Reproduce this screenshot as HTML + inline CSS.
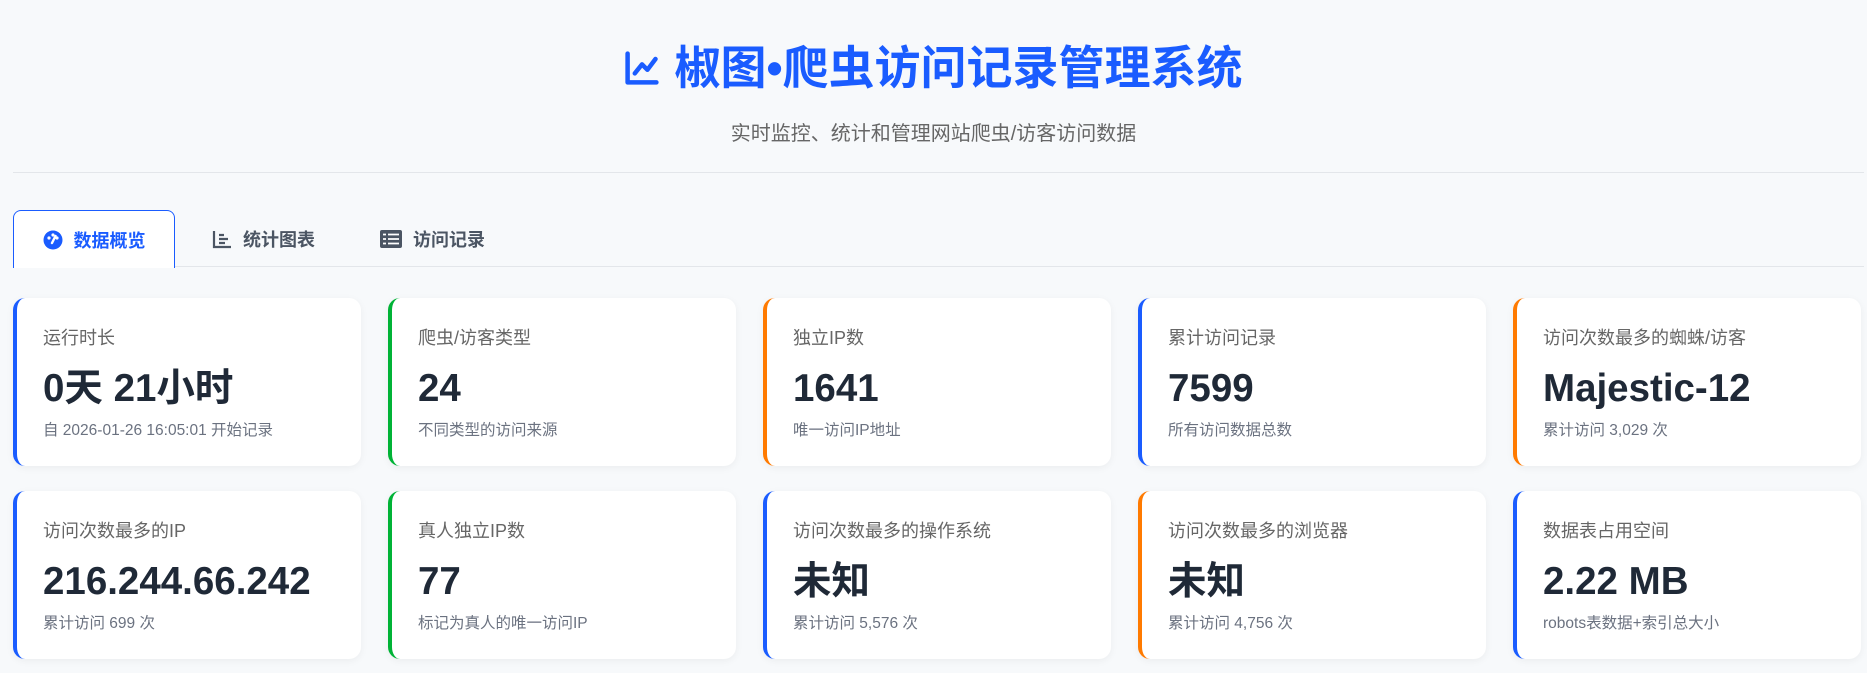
<!DOCTYPE html>
<html><head><meta charset="utf-8"><style>
*{box-sizing:border-box;margin:0;padding:0}
body{width:1867px;height:673px;background:#f7f9fb;font-family:"Liberation Sans","Noto Sans CJK SC",sans-serif;overflow:hidden;position:relative}
.title{position:absolute;top:36px;left:0;width:1867px;text-align:center;color:#1a5cff;font-size:46px;font-weight:bold;line-height:64px}
.title svg{vertical-align:-2px;margin-right:14px}
.sub{position:absolute;top:120px;left:0;width:1867px;text-align:center;color:#666;font-size:20px;line-height:28px}
.hr{position:absolute;top:172px;left:13px;width:1851px;height:1px;background:#e3e6ea}
.tabline{position:absolute;top:266px;left:13px;width:1851px;height:1px;background:#e3e6ea}
.tab{position:absolute;top:210px;height:57px;display:flex;align-items:center;font-size:18px;font-weight:bold;color:#4b5563}
.tab.active{left:13px;width:162px;border:1px solid #1a5cff;border-bottom:none;border-radius:8px 8px 0 0;background:#fff;color:#1a5cff;justify-content:center;height:58px}
.tab svg{margin-right:11px}
.card{position:absolute;width:348px;height:168px;background:#fff;border-radius:12px;border-left:4px solid #1a5cff;box-shadow:0 2px 8px rgba(0,0,0,.05);padding:26px 0 0 26px}
.lbl{font-size:18px;color:#666;line-height:28px}
.val{font-size:38.5px;font-weight:bold;color:#1f2937;line-height:50px;margin-top:12px}
.s{font-size:15.5px;color:#6b7280;line-height:20px;margin-top:7px}
.g{border-left-color:#00b336}.o{border-left-color:#ff7a00}
</style></head><body>
<div class="title"><svg width="36" height="36" viewBox="0 0 40 40" fill="none" stroke="#1a5cff" stroke-width="5" stroke-linecap="round" stroke-linejoin="round"><path d="M4 4V36H36"/><path d="M12 26L20 16L26 22L35 10"/></svg>椒图•爬虫访问记录管理系统</div>
<div class="sub">实时监控、统计和管理网站爬虫/访客访问数据</div>
<div class="hr"></div>
<div class="tabline"></div>
<div class="tab active"><svg width="20" height="20" viewBox="0 0 20 20"><circle cx="10" cy="10" r="9.5" fill="#1a5cff"/><circle cx="6" cy="8" r="1.6" fill="#fff"/><circle cx="10" cy="5" r="1.6" fill="#fff"/><circle cx="14" cy="8" r="1.6" fill="#fff"/><path d="M12.5 6L9 13" stroke="#fff" stroke-width="2.4" stroke-linecap="round"/></svg>数据概览</div>
<div class="tab" style="left:212px"><svg width="20" height="20" viewBox="0 0 20 20" fill="none" stroke="#4b5563" stroke-width="2.2"><path d="M2 2V18H19"/><path d="M7 6H12M7 10H16M7 14H13"/></svg>统计图表</div>
<div class="tab" style="left:380px"><svg width="22" height="18" viewBox="0 0 22 18"><rect x="0" y="0" width="22" height="18" rx="2" fill="#4b5563"/><path d="M3 4.5H6M3 9H6M3 13.5H6M8 4.5H19M8 9H19M8 13.5H19" stroke="#fff" stroke-width="1.8"/></svg>访问记录</div>

<div class="card" style="left:13px;top:298px"><div class="lbl">运行时长</div><div class="val">0天 21小时</div><div class="s">自 2026-01-26 16:05:01 开始记录</div></div>
<div class="card g" style="left:388px;top:298px"><div class="lbl">爬虫/访客类型</div><div class="val">24</div><div class="s">不同类型的访问来源</div></div>
<div class="card o" style="left:763px;top:298px"><div class="lbl">独立IP数</div><div class="val">1641</div><div class="s">唯一访问IP地址</div></div>
<div class="card" style="left:1138px;top:298px"><div class="lbl">累计访问记录</div><div class="val">7599</div><div class="s">所有访问数据总数</div></div>
<div class="card o" style="left:1513px;top:298px"><div class="lbl">访问次数最多的蜘蛛/访客</div><div class="val">Majestic-12</div><div class="s">累计访问 3,029 次</div></div>

<div class="card" style="left:13px;top:491px"><div class="lbl">访问次数最多的IP</div><div class="val">216.244.66.242</div><div class="s">累计访问 699 次</div></div>
<div class="card g" style="left:388px;top:491px"><div class="lbl">真人独立IP数</div><div class="val">77</div><div class="s">标记为真人的唯一访问IP</div></div>
<div class="card" style="left:763px;top:491px"><div class="lbl">访问次数最多的操作系统</div><div class="val">未知</div><div class="s">累计访问 5,576 次</div></div>
<div class="card o" style="left:1138px;top:491px"><div class="lbl">访问次数最多的浏览器</div><div class="val">未知</div><div class="s">累计访问 4,756 次</div></div>
<div class="card" style="left:1513px;top:491px"><div class="lbl">数据表占用空间</div><div class="val">2.22 MB</div><div class="s">robots表数据+索引总大小</div></div>
</body></html>
